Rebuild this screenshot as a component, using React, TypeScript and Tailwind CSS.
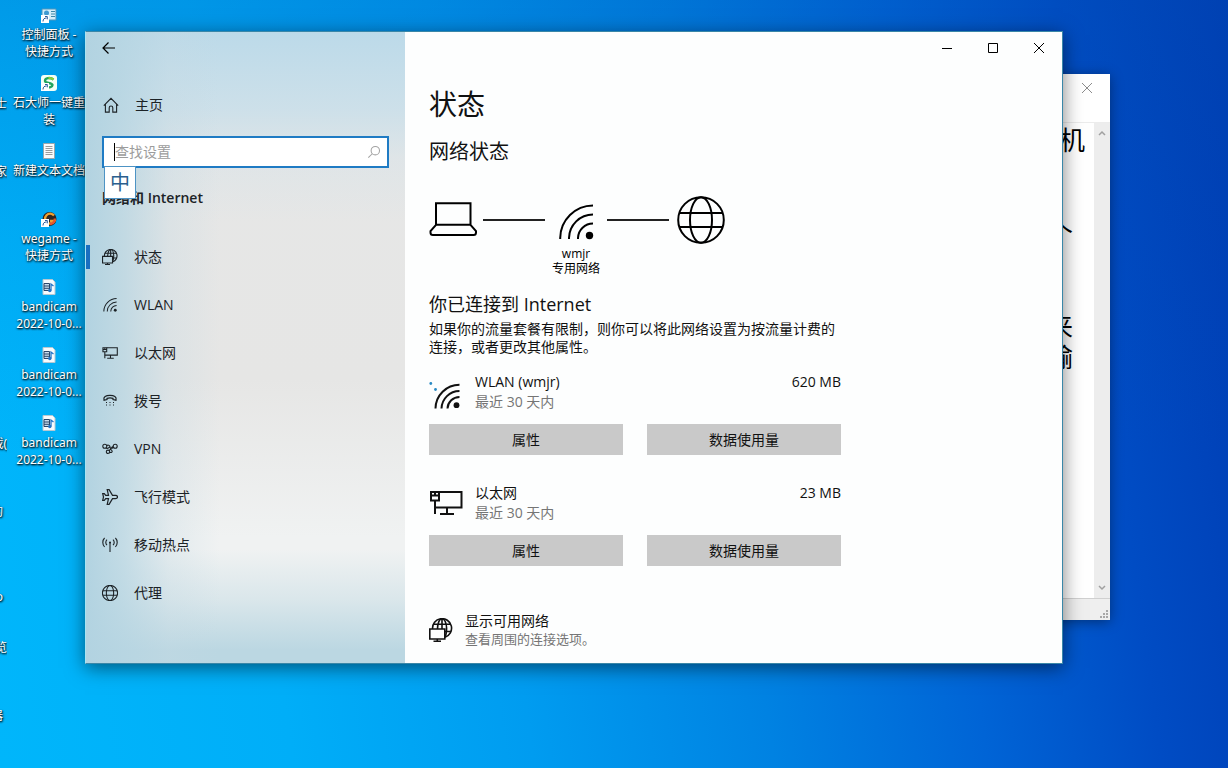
import type { ReactNode } from "react";

type IconProps = { className?: string; strokeWidth?: number };

const HomeIcon = ({ className }: IconProps) => (
  <svg viewBox="0 0 16 16" className={className} fill="none" stroke="currentColor" strokeWidth="1.1">
    <path d="M.8 8.6 8 1.3l7.2 7.3M2.4 7.2v7.9h3.8v-4.3a1.8 1.8 0 0 1 3.6 0v4.3h3.8V7.2" />
  </svg>
);

const WifiIcon = ({ className, strokeWidth = 2 }: IconProps) => (
  <svg viewBox="0 0 36 36" className={className} fill="none" stroke="currentColor" strokeWidth={strokeWidth}>
    <path d="M2.2 35v-1A33 33 0 0 1 35 1.5M11 35v-1a24 24 0 0 1 24-23.5M20 35v-1a15 15 0 0 1 15-14.5" />
    <circle cx="31.5" cy="31.5" r="3.7" fill="currentColor" stroke="none" />
  </svg>
);

const WifiSignalIcon = ({ className }: IconProps) => (
  <svg viewBox="0 0 34 40" className={className} fill="none" stroke="currentColor" strokeWidth="2">
    <path d="M6.500 36.500A24 24 0 0 1 30.500 12.800M12.500 36.500a18 18 0 0 1 18-17.500M18.500 36.500a12 12 0 0 1 12-11.500" />
    <circle cx="27.500" cy="33.200" r="2.900" fill="currentColor" stroke="none" />
    <circle cx="1.800" cy="11.500" r="1.400" fill="#2a8ac4" stroke="none" />
    <circle cx="6.500" cy="17.500" r="1.400" fill="#2a8ac4" stroke="none" />
  </svg>
);

const GlobeIcon = ({ className, strokeWidth = 2 }: IconProps) => (
  <svg viewBox="0 0 48 48" className={className} fill="none" stroke="currentColor" strokeWidth={strokeWidth}>
    <circle cx="24" cy="24" r="22.800" />
    <ellipse cx="24" cy="24" rx="11" ry="22.800" />
    <path d="M2.500 17h43M2.500 31h43" />
  </svg>
);

const GlobeMonitorIcon = ({ className, strokeWidth = 1.6 }: IconProps) => (
  <svg viewBox="0 0 24 24" className={className} fill="none" stroke="currentColor" strokeWidth={strokeWidth}>
    <path d="M3.600 11A9.500 9.500 0 1 1 16 19.200" />
    <path d="M8.500 11c0-6 2-10.300 4.500-10.300s4.600 4.300 4.600 9.500c0 4-.6 7-1.800 9M4.500 6.300h17M16 13.500h6M13 .7V11" />
    <path d="M.8 11h15v10H.8zM8.300 21v2.200M4.500 23.200H12" />
  </svg>
);

const EthernetIcon = ({ className, strokeWidth = 2 }: IconProps) => (
  <svg viewBox="1 3 34 34" className={className} fill="none" stroke="currentColor" strokeWidth={strokeWidth}>
    <path d="M11 9h22.500v15.500H7" />
    <path d="M3 9h8v8.500H3zM3 12.500h8M7 9v3.500M7 17.500V31M19 24.500v6M12 31h14" />
  </svg>
);

const PhoneIcon = ({ className }: IconProps) => (
  <svg viewBox="0 0 16 16" className={className} fill="none" stroke="currentColor" strokeWidth="1.2">
    <path d="M2 7.200C1 3.700 4 2.400 8 2.400s7 1.300 6 4.800l-3-.6V5.400c-2-.6-4-.6-6 0v1.200z" />
    <g fill="currentColor" stroke="none">
      <path d="M4 9h1v1H4zM7.500 9h1v1h-1zM11 9h1v1h-1zM4 11.500h1v1H4zM7.500 11.500h1v1h-1zM11 11.500h1v1h-1z" />
    </g>
  </svg>
);

const VpnIcon = ({ className }: IconProps) => (
  <svg viewBox="0 0 16 16" className={className} fill="none" stroke="currentColor" strokeWidth="1.1">
    <circle cx="2.800" cy="5.300" r="2" />
    <circle cx="13.200" cy="5.300" r="2" />
    <circle cx="6" cy="10.800" r="1.700" />
    <path d="M4.600 4.500c2-1 3.400.2 3.400 1.400 0 1.400 1.300 2 3.300.6M4.300 7c1.800 1.400 3-.8 4-1.700M7.200 9.600l3.500-4.300M7.700 11.300c1.600.7 3-.2 2.300-1.600L8.800 8.400" />
  </svg>
);

const PlaneIcon = ({ className }: IconProps) => (
  <svg viewBox="0 0 16 16" className={className} fill="none" stroke="currentColor" strokeWidth="1.2">
    <path d="M5.200.6h1.900l3.400 5.800h3c1.400 0 2 .8 2 1.600s-.6 1.600-2 1.600h-3l-3.400 5.800H5.200l1.300-5.800H3.700l-1.400 1.700H.7L1.500 8 .7 4.700h1.600l1.400 1.700h2.800z" />
  </svg>
);

const HotspotIcon = ({ className }: IconProps) => (
  <svg viewBox="0 0 16 16" className={className} fill="none" stroke="currentColor" strokeWidth="1.1">
    <path d="M8 5v10M2.600 1C.2 3.400.2 7.400 2.600 9.800M13.400 1c2.400 2.400 2.400 6.400 0 8.800M5 2.700c-1.600 1.500-1.600 3.900 0 5.400M11 2.700c1.600 1.500 1.600 3.900 0 5.400" />
    <circle cx="8" cy="5.400" r="1" fill="currentColor" stroke="none" />
  </svg>
);

const LaptopIcon = ({ className }: IconProps) => (
  <svg viewBox="0 0 48 48" className={className} fill="none" stroke="currentColor" strokeWidth="2">
    <path d="M7 7.200h34.500v21.600H7zM7 28.800l-5.500 6.400v1.300c0 1.600.8 2.500 2.400 2.500H44.600c1.600 0 2.400-.9 2.400-2.500v-1.300l-5.500-6.400" />
  </svg>
);

// Desktop shortcut icons
const ShortcutArrow = () => (
  <>
    <path d="M0 8h8v8H0z" fill="#fff" />
    <path d="M2 14.500c0-2.600 1.500-3.500 3.500-3.500M4 9.500h2.300v2.800" stroke="#2b5a9a" fill="none" />
  </>
);

const ControlPanelIcon = () => (
  <svg viewBox="0 0 16 16" className="size-4">
    <path d="M1 2h14v11H1z" fill="#d4eef9" stroke="#4d95bd" />
    <circle cx="5.500" cy="6" r="2.500" fill="#3f9ad1" />
    <path d="M10 4.500h4M10 7h4M10 9.500h4" stroke="#3d88a8" />
    <ShortcutArrow />
  </svg>
);

const ReinstallIcon = () => (
  <svg viewBox="0 0 16 16" className="size-4">
    <rect width="16" height="16" rx="3" fill="#f4fff6" />
    <path d="M12.500 4.500C9 2 4 3 4 6c0 2.500 7 1.500 7.500 4 0 2-3.500 3-6.500 2" stroke="#21a45d" strokeWidth="2.400" fill="none" />
    <path d="M12.500 4.500C11 3.300 9 3 7.500 3.300" stroke="#8bcf3a" strokeWidth="2.400" fill="none" />
    <ShortcutArrow />
  </svg>
);

const TextFileIcon = () => (
  <svg viewBox="0 0 16 16" className="size-4">
    <path d="M2.500.5h11v15h-11z" fill="#fbfbfb" stroke="#9aa7ad" />
    <path d="M4.500 3.500h7M4.500 5.500h7M4.500 7.500h7M4.500 9.500h7M4.500 11.500h7" stroke="#9b9b9b" />
  </svg>
);

const WegameIcon = () => (
  <svg viewBox="0 0 16 16" className="size-4">
    <circle cx="8.500" cy="8" r="7" fill="#2d2522" />
    <path d="M13 4.500A5 5 0 1 0 13.500 10H9" stroke="#f0a02f" strokeWidth="2.300" fill="none" />
    <path d="M13.800 7.500A5 5 0 0 1 9 13" stroke="#e6552b" strokeWidth="2.300" fill="none" />
    <ShortcutArrow />
  </svg>
);

const MediaFileIcon = () => (
  <svg viewBox="0 0 16 16" className="size-4">
    <path d="M2 .5h9.500L14 3v12.500H2z" fill="#f8fbfd" stroke="#b7c8d2" />
    <path d="M3 4.500h5.500v7H3zM3 7h5.500M3 9.300h5.500" fill="#c9dced" stroke="#29466b" />
    <path d="M10 11.500V5l2.500 2" stroke="#2374c6" strokeWidth="1.300" fill="none" />
    <circle cx="8.800" cy="11.500" r="1.700" fill="#2374c6" />
  </svg>
);

const shortcuts: { icon: ReactNode; lines: string[] }[] = [
  { icon: <ControlPanelIcon />, lines: ["控制面板 -", "快捷方式"] },
  { icon: <ReinstallIcon />, lines: ["石大师一键重", "装"] },
  { icon: <TextFileIcon />, lines: ["新建文本文档"] },
  { icon: <WegameIcon />, lines: ["wegame -", "快捷方式"] },
  { icon: <MediaFileIcon />, lines: ["bandicam", "2022-10-0..."] },
  { icon: <MediaFileIcon />, lines: ["bandicam", "2022-10-0..."] },
  { icon: <MediaFileIcon />, lines: ["bandicam", "2022-10-0..."] },
];

// first desktop column, mostly past the left edge of the screen
const edgeLabels = [[], ["士"], ["家"], [], [], [], ["载("], ["的"], ["", "o"], ["览"], ["器"]];

const navItems: { icon: ReactNode; label: string }[] = [
  { icon: <GlobeMonitorIcon className="size-4" strokeWidth={1.7} />, label: "状态" },
  { icon: <WifiIcon className="size-4 p-px" strokeWidth={2.6} />, label: "WLAN" },
  { icon: <EthernetIcon className="size-4" strokeWidth={2.3} />, label: "以太网" },
  { icon: <PhoneIcon className="size-4" />, label: "拨号" },
  { icon: <VpnIcon className="size-4" />, label: "VPN" },
  { icon: <PlaneIcon className="size-4" />, label: "飞行模式" },
  { icon: <HotspotIcon className="size-4" />, label: "移动热点" },
  { icon: <GlobeIcon className="size-4" strokeWidth={3.2} />, label: "代理" },
];

const connections = [
  { icon: <WifiSignalIcon className="h-10 w-[34px]" />, name: "WLAN (wmjr)", usage: "620 MB" },
  { icon: <EthernetIcon className="size-[34px]" />, name: "以太网", usage: "23 MB" },
];

const documentLines = ["机", "", "", "个", "", "", "来", "输"];

function DesktopIcons() {
  return (
    <div className="font-['Noto_Sans','Noto_Sans_CJK_SC',sans-serif] text-xs leading-[17px] whitespace-nowrap text-white [text-shadow:1px_1px_2px_#000,0_1px_2px_#0008]">
      <div aria-hidden="true" className="absolute top-[7px] left-0 w-[7px] overflow-hidden">
        {edgeLabels.map((lines, index) => (
          <div
            key={index}
            className={`flex h-[68px] flex-col items-end pt-5 ${[7, 8, 10].includes(index) ? "pr-1" : ""}`}
          >
            {lines.map((line, i) => (
              <span key={i} className="min-h-[17px]">
                {line}
              </span>
            ))}
          </div>
        ))}
      </div>
      <ul className="absolute top-[7px] left-[10px] w-[78px]">
        {shortcuts.map(({ icon, lines }, index) => (
          <li key={index} className="flex h-[68px] flex-col items-center gap-[3px]">
            {icon}
            <div className="text-center">
              {lines.map((line) => (
                <div key={line}>{line}</div>
              ))}
            </div>
          </li>
        ))}
      </ul>
    </div>
  );
}

function NotepadWindow() {
  return (
    <section
      aria-label="记事本"
      className="absolute top-[74px] right-[118px] bottom-[148px] left-[300px] flex flex-col bg-white shadow-[0_2px_12px_rgba(0,0,0,0.4)]"
    >
      <header className="flex h-[49px] items-start justify-end border-b border-[#ececec] px-[17px] pt-2">
        <button aria-label="关闭记事本" className="text-[#8c8c8c]">
          <svg viewBox="0 0 12 12" className="size-3" fill="none" stroke="currentColor">
            <path d="m1 1 10 10M11 1 1 11" />
          </svg>
        </button>
      </header>
      <div className="flex flex-1">
        <div className="flex-1 pt-[2px] pr-[9px] text-right text-[26px] leading-[31px] text-black">
          {documentLines.map((line, index) => (
            <p key={index} className="h-[31px] not-first:pr-3">
              {line}
            </p>
          ))}
        </div>
        <div className="flex w-4 flex-col items-center justify-between bg-[#ededed] py-1 text-[#a0a0a0]">
          <svg viewBox="0 0 8 12" className="h-3 w-2" fill="none" stroke="currentColor" strokeWidth="1.500">
            <path d="m1 8 3-3 3 3" />
          </svg>
          <svg viewBox="0 0 8 12" className="h-3 w-2" fill="none" stroke="currentColor" strokeWidth="1.500">
            <path d="m1 4 3 3 3-3" />
          </svg>
        </div>
      </div>
      <footer className="flex h-[22px] items-end justify-end border-t border-[#d0d0d0] bg-[#efefef] p-[2px]">
        <svg viewBox="0 0 8 8" className="size-2 fill-[#a8a8a8]">
          <path d="M6 0h2v2H6zM3 3h2v2H3zM6 3h2v2H6zM0 6h2v2H0zM3 6h2v2H3zM6 6h2v2H6z" />
        </svg>
      </footer>
    </section>
  );
}

function Sidebar() {
  return (
    <aside className="w-[319px] shrink-0 bg-[linear-gradient(to_right,#b2d3e1_0%,#b6d5e2c0_12%,#c3d9e350_26%,transparent_42%),linear-gradient(to_bottom,#bcdae9_0%,#c6deeacc_12%,#d4e2e966_20%,transparent_30%,transparent_82%,#cbdfe699_90%,#bbd7e2_98%),linear-gradient(#e6e7e7,#e6e6e5_55%,#f0f2f2_80%)] text-sm text-[#1c2226]">
      <div className="flex h-8 items-center pl-[15px]">
        <button aria-label="返回" className="text-black">
          <svg viewBox="0 0 16 16" className="size-4" fill="none" stroke="currentColor" strokeWidth="1.200">
            <path d="M14 8H2M7.500 2.500 2 8l5.500 5.500" />
          </svg>
        </button>
      </div>
      <button className="mt-[17px] flex h-12 w-full items-center gap-4 pl-[17px]">
        <HomeIcon className="size-4" />
        主页
      </button>
      <div className="relative mx-4 mt-[7px]">
        <label className="flex h-8 items-center border-2 border-[#1f7bc4] bg-white pr-[6px] pl-[10px]">
          <span className="h-[18px] w-px bg-black" />
          <input
            type="text"
            aria-label="查找设置"
            placeholder="查找设置"
            className="min-w-0 flex-1 text-sm outline-none placeholder:text-[#9c9c9c]"
          />
          <svg viewBox="0 0 16 16" className="size-[14px]" fill="none" stroke="#a3a3a3" strokeWidth="1.200">
            <circle cx="9.500" cy="6.500" r="4.800" />
            <path d="M6 10 1.500 14.500" />
          </svg>
        </label>
        <div className="absolute top-[30px] left-[2px] flex h-[33px] w-8 items-center justify-center border border-[#4d93c4] bg-white text-xl text-[#2b5f8e]">
          中
        </div>
      </div>
      <h2 className="mt-[6px] flex h-12 items-center pl-4 font-semibold">网络和 Internet</h2>
      <nav className="mt-[11px]">
        {navItems.map(({ icon, label }, index) => (
          <a key={label} href="#" className="flex h-12 items-center pr-4">
            <span className={index === 0 ? "h-6 w-1 bg-[#1a6fc0]" : "h-6 w-1"} />
            <span className="ml-3">{icon}</span>
            <span className="ml-4">{label}</span>
          </a>
        ))}
      </nav>
    </aside>
  );
}

function WindowControls() {
  return (
    <div className="flex h-8 justify-end text-black">
      <button aria-label="最小化" className="flex w-[46px] items-center justify-center">
        <svg viewBox="0 0 12 12" className="size-3" fill="none" stroke="currentColor">
          <path d="M1 6.500h10" />
        </svg>
      </button>
      <button aria-label="最大化" className="flex w-[46px] items-center justify-center">
        <svg viewBox="0 0 12 12" className="size-3" fill="none" stroke="currentColor">
          <path d="M1.500 1.500h9v9h-9z" />
        </svg>
      </button>
      <button aria-label="关闭" className="flex w-[46px] items-center justify-center">
        <svg viewBox="0 0 12 12" className="size-3" fill="none" stroke="currentColor">
          <path d="m1 1 10 10M11 1 1 11" />
        </svg>
      </button>
    </div>
  );
}

function StatusPage() {
  return (
    <main className="min-w-0 flex-1 overflow-hidden bg-[#fdfefe] text-sm text-[#111]">
      <WindowControls />
      <div className="px-6">
        <h1 className="mt-5 text-[28px] leading-10">状态</h1>
        <h2 className="mt-[14px] text-xl leading-7">网络状态</h2>

        <div className="mt-[30px] flex items-start text-black">
          <LaptopIcon className="size-12" />
          <div className="ml-[6px] flex h-12 w-[62px] items-center">
            <div className="h-[2px] w-full bg-[#222]" />
          </div>
          <div className="flex w-[62px] flex-col items-center pt-2 text-xs leading-[15px]">
            <WifiIcon className="mb-[6px] size-9" />
            <span>wmjr</span>
            <span>专用网络</span>
          </div>
          <div className="flex h-12 w-[62px] items-center">
            <div className="h-[2px] w-full bg-[#222]" />
          </div>
          <GlobeIcon className="ml-2 size-12" />
        </div>

        <div className="max-w-[412px]">
          <h3 className="mt-4 text-lg leading-6">你已连接到 Internet</h3>
          <p className="mt-1 leading-[18px]">
            如果你的流量套餐有限制，则你可以将此网络设置为按流量计费的连接，或者更改其他属性。
          </p>

          <div className="mt-4 space-y-7">
            {connections.map(({ icon, name, usage }) => (
              <section key={name}>
                <div className="flex h-10 items-center gap-3">
                  {icon}
                  <div className="flex-1 leading-5">
                    <div>{name}</div>
                    <div className="text-[#757575]">最近 30 天内</div>
                  </div>
                  <div className="self-start leading-5">{usage}</div>
                </div>
                <div className="mt-3 grid grid-cols-2 gap-6">
                  <button className="h-[31px] bg-[#c9c9c9]">属性</button>
                  <button className="h-[31px] bg-[#c9c9c9]">数据使用量</button>
                </div>
              </section>
            ))}
          </div>

          <a href="#" className="mt-[46px] flex items-center gap-3 leading-[18px]">
            <GlobeMonitorIcon className="size-6" />
            <span>
              <span className="block">显示可用网络</span>
              <span className="block text-[13px] text-[#757575]">查看周围的连接选项。</span>
            </span>
          </a>
        </div>
      </div>
    </main>
  );
}

export default function App() {
  return (
    <div className="relative h-screen min-h-[768px] overflow-hidden bg-[linear-gradient(to_bottom,#0050b440_0%,#0050b418_30%,transparent_60%),linear-gradient(82deg,#00b6fb_0%,#00aef8_22%,#009cf0_40%,#0082e2_58%,#0064d6_74%,#004cc4_87%,#003cb2_100%)] font-['Open_Sans','Noto_Sans_CJK_SC',sans-serif]">
      <DesktopIcons />
      <NotepadWindow />
      <div className="absolute top-[31px] right-[165px] bottom-[104px] left-[85px] flex border border-[#3a87a8] border-l-[#a9e4f2] bg-white shadow-[0_4px_18px_rgba(0,0,0,0.5)]">
        <Sidebar />
        <StatusPage />
      </div>
    </div>
  );
}
